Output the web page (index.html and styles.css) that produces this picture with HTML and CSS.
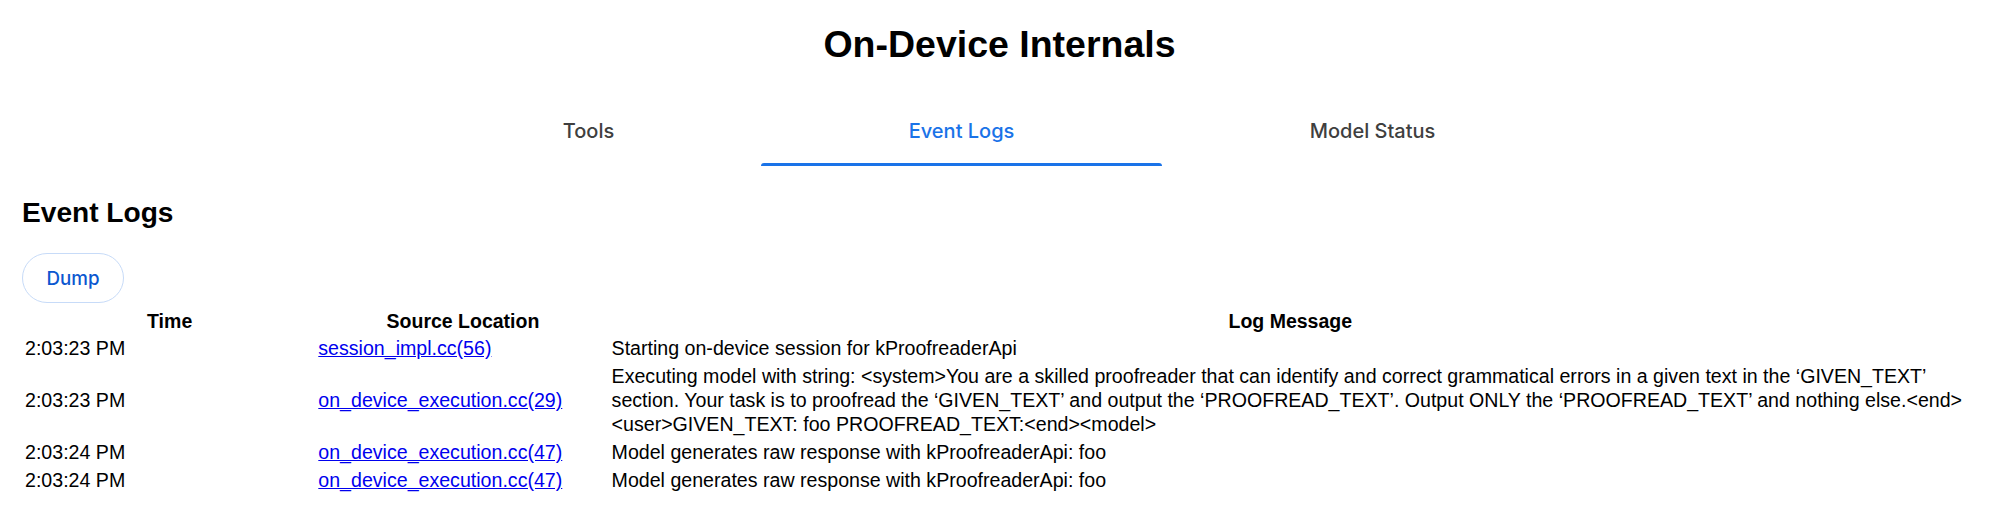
FILE: index.html
```html
<!DOCTYPE html>
<html lang="en">
<head>
<meta charset="utf-8">
<title>On-Device Internals</title>
<link rel="stylesheet" href="styles.css">
</head>
<body>
<h1 class="title">On-Device Internals</h1>
<nav class="tabs">
  <div class="tab"><span class="tab-label">Tools</span></div>
  <div class="tab tab-active"><span class="tab-label">Event Logs</span></div>
  <div class="tab"><span class="tab-label">Model Status</span></div>
</nav>
<main class="panel">
  <h2 class="panel-title">Event Logs</h2>
  <button class="dump" type="button">Dump</button>
  <table class="logs">
    <colgroup>
      <col class="col-time">
      <col class="col-src">
      <col class="col-msg">
    </colgroup>
    <thead>
      <tr><th>Time</th><th>Source Location</th><th>Log Message</th></tr>
    </thead>
    <tbody>
      <tr>
        <td>2:03:23 PM</td>
        <td><a href="#">session_impl.cc(56)</a></td>
        <td>Starting on-device session for kProofreaderApi</td>
      </tr>
      <tr>
        <td>2:03:23 PM</td>
        <td><a href="#">on_device_execution.cc(29)</a></td>
        <td>Executing model with string: &lt;system&gt;You are a skilled proofreader that can identify and correct grammatical errors in a given text in the ‘GIVEN_TEXT’ section. Your task is to proofread the ‘GIVEN_TEXT’ and output the ‘PROOFREAD_TEXT’. Output ONLY the ‘PROOFREAD_TEXT’ and nothing else.&lt;end&gt; &lt;user&gt;GIVEN_TEXT: foo PROOFREAD_TEXT:&lt;end&gt;&lt;model&gt;</td>
      </tr>
      <tr>
        <td>2:03:24 PM</td>
        <td><a href="#">on_device_execution.cc(47)</a></td>
        <td>Model generates raw response with kProofreaderApi: foo</td>
      </tr>
      <tr>
        <td>2:03:24 PM</td>
        <td><a href="#">on_device_execution.cc(47)</a></td>
        <td>Model generates raw response with kProofreaderApi: foo</td>
      </tr>
    </tbody>
  </table>
</main>
</body>
</html>
```

FILE: styles.css
```css
html {
  background: #ffffff;
}

body {
  margin: 8px;
  font-family: "Liberation Sans", Arial, sans-serif;
  font-size: 18.75px;
  color: #000000;
}

.title {
  margin: 15px 0 28px;
  font-size: 37.5px;
  font-weight: 700;
  text-align: center;
}

.tabs {
  display: grid;
  grid-template-columns: 345px 401px 421px;
  width: 1167px;
  height: 72px;
  margin: 0 auto;
}

.tab {
  display: flex;
  flex-direction: column;
  font-family: Inter, "Liberation Sans", sans-serif;
  font-size: 20px;
  font-weight: 500;
  color: #3f3f3f;
}

.tab-label {
  flex: 1;
  display: flex;
  align-items: center;
  justify-content: center;
  padding-top: 4px;
}

.tab::after {
  content: "";
  height: 3px;
  border-radius: 3px 3px 0 0;
}

.tab-active {
  color: #1a73e8;
}

.tab-active::after {
  background: #1a73e8;
}

.panel {
  display: block;
  padding: 8px 19px 0 14px;
}

.panel-title {
  margin: 23px 0 24px;
  font-size: 28.125px;
  font-weight: 700;
}

.dump {
  display: block;
  width: 102px;
  height: 50px;
  padding: 0;
  border: 1px solid #c7dbf8;
  border-radius: 25px;
  background: #ffffff;
  color: #0b57d0;
  font-family: Inter, "Liberation Sans", sans-serif;
  font-size: 18.75px;
  font-weight: 500;
}

.logs {
  width: 100%;
  margin-top: 5px;
  border-spacing: 2px;
  font-size: 19.6px;
  line-height: 24px;
}

.col-time {
  width: 15%;
}

.col-src {
  width: 15%;
}

.col-msg {
  width: 70%;
}

.logs th {
  padding: 0 1px;
  font-size: 19.5px;
  line-height: 23px;
  font-weight: 700;
  text-align: center;
}

.logs td {
  padding: 1px;
  text-align: left;
  vertical-align: middle;
}

.logs a {
  color: #0000ee;
  text-decoration: underline;
}
```
